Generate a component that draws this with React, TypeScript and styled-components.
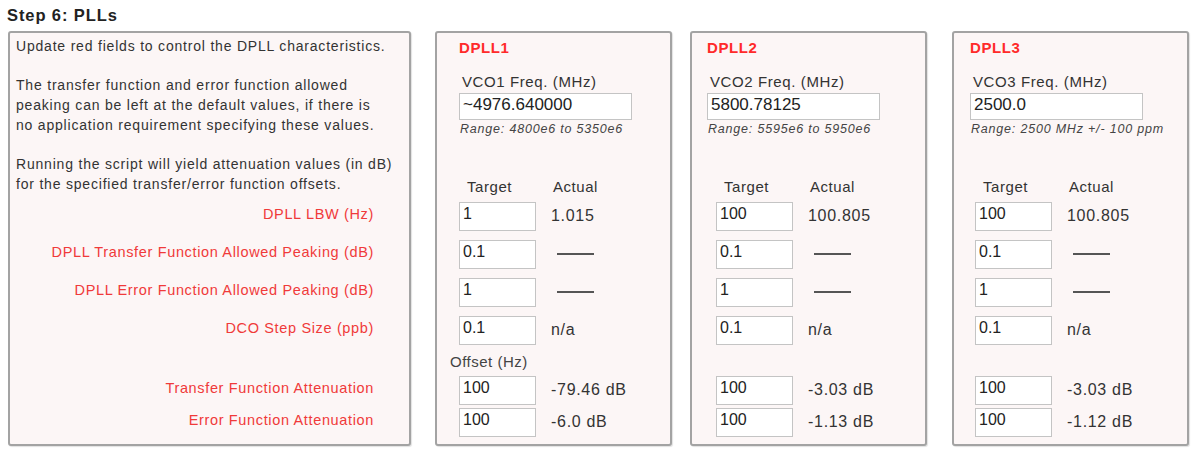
import { createGlobalStyle } from 'styled-components';
import styled from 'styled-components';

type TRow = {
  target: string;
  actual: string;
};

type TPll = {
  name: string;
  vco: string;
  freq: string;
  range: string;
  head: number;
  indent: number;
  rows: TRow[];
  offsets: TRow[];
  showOffset: boolean;
};

const DASH = '—';

const plls: TPll[] = [
  {
    name: 'DPLL1',
    vco: 'VCO1 Freq. (MHz)',
    freq: '~4976.640000',
    range: 'Range: 4800e6 to 5350e6',
    head: 22,
    indent: 22,
    rows: [
      { target: '1', actual: '1.015' },
      { target: '0.1', actual: DASH },
      { target: '1', actual: DASH },
      { target: '0.1', actual: 'n/a' }
    ],
    offsets: [
      { target: '100', actual: '-79.46 dB' },
      { target: '100', actual: '-6.0 dB' }
    ],
    showOffset: true
  },
  {
    name: 'DPLL2',
    vco: 'VCO2 Freq. (MHz)',
    freq: '5800.78125',
    range: 'Range: 5595e6 to 5950e6',
    head: 15,
    indent: 24,
    rows: [
      { target: '100', actual: '100.805' },
      { target: '0.1', actual: DASH },
      { target: '1', actual: DASH },
      { target: '0.1', actual: 'n/a' }
    ],
    offsets: [
      { target: '100', actual: '-3.03 dB' },
      { target: '100', actual: '-1.13 dB' }
    ],
    showOffset: false
  },
  {
    name: 'DPLL3',
    vco: 'VCO3 Freq. (MHz)',
    freq: '2500.0',
    range: 'Range: 2500 MHz +/- 100 ppm',
    head: 16,
    indent: 21,
    rows: [
      { target: '100', actual: '100.805' },
      { target: '0.1', actual: DASH },
      { target: '1', actual: DASH },
      { target: '0.1', actual: 'n/a' }
    ],
    offsets: [
      { target: '100', actual: '-3.03 dB' },
      { target: '100', actual: '-1.12 dB' }
    ],
    showOffset: false
  }
];

const labels = [
  'DPLL LBW (Hz)',
  'DPLL Transfer Function Allowed Peaking (dB)',
  'DPLL Error Function Allowed Peaking (dB)',
  'DCO Step Size (ppb)'
];

const offsetLabels = ['Transfer Function Attenuation', 'Error Function Attenuation'];

const PllPanel = ({ pll }: { pll: TPll }) => (
  <Panel $width={237}>
    <Head $indent={pll.head}>
      <PllTitle>{pll.name}</PllTitle>
      <FieldLabel>{pll.vco}</FieldLabel>
      <FreqInput value={pll.freq} readOnly />
      <Range>{pll.range}</Range>
    </Head>
    <ColumnHead $indent={pll.indent}>
      <span className="target">Target</span>
      <span>Actual</span>
    </ColumnHead>
    {pll.rows.map((row, i) => (
      <Row key={i} $indent={pll.indent}>
        <ValueInput value={row.target} readOnly />
        {row.actual === DASH ? <Dash /> : <Actual>{row.actual}</Actual>}
      </Row>
    ))}
    <OffsetLabel $indent={pll.indent - 9}>{pll.showOffset ? 'Offset (Hz)' : ''}</OffsetLabel>
    {pll.offsets.map((row, i) => (
      <Row key={i} $indent={pll.indent} $short>
        <ValueInput value={row.target} readOnly />
        <Actual>{row.actual}</Actual>
      </Row>
    ))}
  </Panel>
);

export default function App() {
  return (
    <Page>
      <GlobalStyle />
      <Title>Step 6: PLLs</Title>
      <Panels>
        <Panel $width={403}>
          <Intro>
            <p>Update red fields to control the DPLL characteristics.</p>
            <p>
              The transfer function and error function allowed
              <br />
              peaking can be left at the default values, if there is
              <br />
              no application requirement specifying these values.
            </p>
            <p>
              Running the script will yield attenuation values (in dB)
              <br />
              for the specified transfer/error function offsets.
            </p>
          </Intro>
          {labels.map((label) => (
            <LabelRow key={label}>{label}</LabelRow>
          ))}
          <OffsetLabel $indent={0} />
          {offsetLabels.map((label) => (
            <LabelRow key={label} $short>
              {label}
            </LabelRow>
          ))}
        </Panel>
        {plls.map((pll) => (
          <PllPanel key={pll.name} pll={pll} />
        ))}
      </Panels>
    </Page>
  );
}

const GlobalStyle = createGlobalStyle`
  * {
    box-sizing: border-box;
  }

  body {
    margin: 0;
    background: #ffffff;
    font-family: 'Liberation Sans', Arial, sans-serif;
    color: #333333;
  }
`;

const Page = styled.div`
  width: 1200px;
  height: 463px;
  padding: 5px 0 0 8px;
`;

const Title = styled.h1`
  margin: 0 0 0 -1px;
  font-size: 16.5px;
  line-height: 20px;
  letter-spacing: 0.9px;
  font-weight: 700;
  color: #222222;
`;

const Panels = styled.div`
  display: flex;
  align-items: flex-start;
  margin-top: 6px;

  & > :nth-child(2) {
    margin-left: 24px;
  }
  & > :nth-child(3) {
    margin-left: 18px;
  }
  & > :nth-child(4) {
    margin-left: 25px;
  }
`;

const Panel = styled.section<{ $width: number }>`
  width: ${({ $width }) => $width}px;
  height: 415px;
  display: flex;
  flex-direction: column;
  background-color: #fcf6f6;
  border: 2px solid #a3a3a3;
  border-radius: 3px;
  box-shadow: 1px 1px 1px rgba(0, 0, 0, 0.12);
`;

const Intro = styled.div`
  height: 162px;
  padding: 3px 0 0 6px;
  font-size: 14px;
  line-height: 20px;
  letter-spacing: 0.8px;
  white-space: nowrap;

  p {
    margin: 0 0 19px;
  }
`;

const LabelRow = styled.div<{ $short?: boolean }>`
  height: ${({ $short }) => ($short ? 32 : 38)}px;
  padding: 0 35px 0 0;
  display: flex;
  align-items: center;
  justify-content: flex-end;
  font-size: 14.5px;
  letter-spacing: 0.65px;
  color: #f03a3a;
  white-space: nowrap;
`;

const Head = styled.div<{ $indent: number }>`
  height: 143px;
  padding-left: ${({ $indent }) => $indent}px;
  display: flex;
  flex-direction: column;
`;

const PllTitle = styled.h2`
  margin: 6px 0 0;
  font-size: 15px;
  line-height: 18px;
  letter-spacing: 0.6px;
  font-weight: 700;
  color: #ff2a2a;
`;

const FieldLabel = styled.div`
  margin: 16px 0 0 3px;
  font-size: 15px;
  line-height: 18px;
  letter-spacing: 0.6px;
`;

const FreqInput = styled.input`
  margin: 2px 0 0 0;
  width: 173px;
  height: 27px;
  padding: 0 0 3px 3px;
  border: 1px solid #c4c4c4;
  background: #ffffff;
  font-family: inherit;
  font-size: 17px;
  color: #222222;
  outline: none;
`;

const Range = styled.div`
  margin: 2px 0 0 1px;
  font-size: 12.5px;
  line-height: 14px;
  letter-spacing: 0.8px;
  font-style: italic;
  color: #444444;
  white-space: nowrap;
`;

const ColumnHead = styled.div<{ $indent: number }>`
  height: 21px;
  padding: 2px 0 0 ${({ $indent }) => $indent + 8}px;
  display: flex;
  font-size: 15px;
  line-height: 18px;
  letter-spacing: 0.55px;

  .target {
    width: 86px;
  }
`;

const Row = styled.div<{ $indent: number; $short?: boolean }>`
  height: ${({ $short }) => ($short ? 32 : 38)}px;
  padding-left: ${({ $indent }) => $indent}px;
  display: flex;
  align-items: center;
  gap: 15px;
`;

const ValueInput = styled.input`
  width: 77px;
  height: 29px;
  padding: 0 0 5px 3px;
  border: 1px solid #c4c4c4;
  background: #ffffff;
  font-family: inherit;
  font-size: 16px;
  color: #222222;
  outline: none;
`;

const Actual = styled.span`
  font-size: 16px;
  letter-spacing: 0.7px;
  color: #333333;
`;

const Dash = styled.span`
  display: block;
  width: 37px;
  height: 2px;
  margin-left: 6px;
  background: #555555;
`;

const OffsetLabel = styled.div<{ $indent: number }>`
  height: 25px;
  padding: 3px 0 0 ${({ $indent }) => $indent}px;
  font-size: 15px;
  line-height: 20px;
  letter-spacing: 0.5px;
  color: #444444;
`;
